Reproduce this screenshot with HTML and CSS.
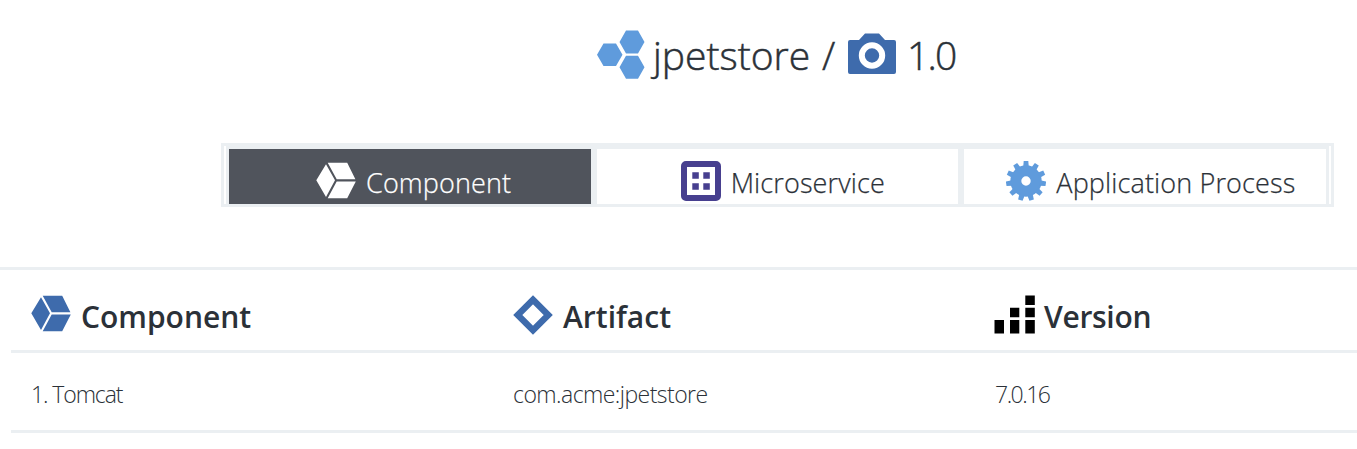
FILE: index.html
```html
<!DOCTYPE html>
<html lang="en">
<head>
<meta charset="utf-8">
<title>jpetstore / 1.0</title>
<link rel="stylesheet" href="styles.css">
</head>
<body>
<svg class="defs" aria-hidden="true">
  <symbol id="cube" viewBox="0 0 40 38">
    <path d="M11.7 .8H31.2L39.4 17.2H20.7ZM20.7 19.5H39.8L31.2 36.3H11.7ZM10 2.2L19 18.3L10 35L.3 18.3Z"/>
  </symbol>
</svg>
<h1 class="title">
  <svg class="icon-app" viewBox="0 0 48 48"><path d="M29 0H41L47.5 11.5L41 23H29L22.500 11.500ZM29 25.200H41L47.500 36.700L41 48.200H29L22.500 36.700ZM6.500 13H19L25.500 24.300L19 35.600H6.500L0 24.300Z"/></svg>
  <span class="name">jpetstore</span>
  <span class="slash">/</span>
  <svg class="icon-camera" viewBox="0 0 48 42"><path d="M2 7H11L17 .5H31L37 7H46Q48 7 48 9V39Q48 41 46 41H2Q0 41 0 39V9Q0 7 2 7Z"/><circle cx="24" cy="22.500" r="10.200"/></svg>
  <span class="number">1.0</span>
</h1>
<nav class="tabs">
  <a class="tab active"><svg class="icon-cube"><use href="#cube"/></svg><span class="t-component">Component</span></a>
  <a class="tab"><svg class="icon-micro" viewBox="0 0 40 40"><rect class="frame" x="3" y="3" width="34" height="34" rx="2"/><path d="M11.300 11.300h6.500v6.500h-6.500zM22.300 11.300h6.500v6.500h-6.500zM11.300 22.300h6.500v6.500h-6.500zM22.300 22.300h6.500v6.500h-6.500z"/></svg><span class="t-micro">Microservice</span></a>
  <a class="tab"><svg class="icon-gear" viewBox="-20 -20 40 40">
    <defs><path id="tooth" d="M-2.800 -14L-2.300 -20H2.300L2.800 -14Z"/></defs>
    <circle class="ring" r="10.200"/>
    <use href="#tooth"/><use href="#tooth" transform="rotate(32.727)"/><use href="#tooth" transform="rotate(65.454)"/><use href="#tooth" transform="rotate(98.182)"/><use href="#tooth" transform="rotate(130.909)"/><use href="#tooth" transform="rotate(163.636)"/><use href="#tooth" transform="rotate(196.364)"/><use href="#tooth" transform="rotate(229.091)"/><use href="#tooth" transform="rotate(261.818)"/><use href="#tooth" transform="rotate(294.546)"/><use href="#tooth" transform="rotate(327.273)"/>
  </svg><span class="t-process">Application Process</span></a>
</nav>
<main class="panel">
  <div class="row head">
    <div class="cell"><svg class="icon-cube"><use href="#cube"/></svg><span class="h-component">Component</span></div>
    <div class="cell"><svg class="icon-diamond" viewBox="0 0 40 40"><path d="M20 4.800L35.200 20L20 35.200L4.800 20Z"/></svg><span class="h-artifact">Artifact</span></div>
    <div class="cell"><svg class="icon-bars" viewBox="0 0 41 39"><path d="M.5 25h9.500v13.500H.5zM16 12.700h9.300v9.500H16zM16 25h9.300v13.500H16zM31.300 .5h9.500V10h-9.500zM31.300 12.700h9.500v9.500h-9.500zM31.300 25h9.500v13.500h-9.500z"/></svg><span class="h-version">Version</span></div>
  </div>
  <div class="row body">
    <div class="cell"><span class="c-name">1. Tomcat</span></div>
    <div class="cell"><span class="c-artifact">com.acme:jpetstore</span></div>
    <div class="cell"><span class="c-version">7.0.16</span></div>
  </div>
</main>
</body>
</html>
```
FILE: styles.css
```css
* { box-sizing: border-box; }
body {
  margin: 0;
  height: 449px;
  overflow: hidden;
  background: #fff;
  color: #2b3138;
  font-family: "Open Sans", "Noto Sans", sans-serif;
}
svg { display: block; flex: none; }
span { white-space: nowrap; }
.defs { display: none; }

.title {
  display: flex;
  align-items: flex-start;
  height: 143px;
  margin: 0;
  padding: 30px 0 0 597px;
  font-size: 39px;
  font-weight: 300;
  line-height: 50px;
  -webkit-text-stroke: .5px currentColor;
}
.icon-app { width: 48px; height: 49px; fill: #5f9bdc; }
.name { width: 157px; margin-left: 8px; }
.slash { width: 16px; margin-left: 12px; }
.icon-camera { width: 48px; height: 42px; margin: 3px 0 0 10px; fill: #3e6bac; overflow: visible; }
.icon-camera circle { fill: none; stroke: #fff; stroke-width: 6; }
.number { margin-left: 11px; letter-spacing: -1.8px; }

.tabs {
  display: grid;
  grid-template-columns: repeat(3, 1fr);
  width: 1113px;
  height: 64px;
  margin-left: 221px;
  padding: 0 2px;
  border: 3px solid #ebeff2;
}
.tab {
  display: flex;
  align-items: center;
  padding-top: 9px;
  border: solid #ebeff2;
  border-width: 3px 3px 0;
  font-size: 27px;
  font-weight: 300;
  line-height: 40px;
  letter-spacing: .13px;
  -webkit-text-stroke: .25px currentColor;
}
.tab span { margin-left: 10px; padding-top: 3px; }
.tab:nth-child(1) { padding-left: 87px; }
.tab:nth-child(2) { padding-left: 84px; }
.tab:nth-child(3) { padding-left: 42px; }
.tab.active { background: #50545c; background-clip: padding-box; color: #fff; }
.icon-cube { width: 40px; height: 38px; fill: #3e6bac; }
.active .icon-cube { fill: #fff; }
.icon-micro { width: 40px; height: 40px; fill: #473f8f; }
.frame { fill: none; stroke: #473f8f; stroke-width: 6; }
.icon-gear { width: 40px; height: 40px; fill: #5f9bdc; }
.ring { fill: none; stroke: #5f9bdc; stroke-width: 11; }

.panel {
  margin-top: 60px;
  padding-left: 11px;
  border-top: 3px solid #ebeff2;
}
.row {
  display: grid;
  grid-template-columns: 482px 482px 1fr;
  border-bottom: 3px solid #ebeff2;
}
.cell { display: flex; padding-left: 20px; }
.head { height: 83px; padding-top: 25px; font-size: 30px; font-weight: 600; line-height: 44px; }
.head .icon-cube { margin-right: 10px; }
.icon-diamond { width: 40px; height: 40px; margin-right: 10px; }
.icon-diamond path { fill: none; stroke: #3e6bac; stroke-width: 6.5; }
.icon-bars { width: 41px; height: 39px; margin: 0 9px 0 -1px; fill: #000; }
.h-version { letter-spacing: -.3px; }
.body { height: 80px; padding-top: 23px; font-size: 23px; font-weight: 300; line-height: 36px; }
.c-name { letter-spacing: -1.1px; }
.c-artifact { letter-spacing: -.55px; }
.c-version { letter-spacing: -1.5px; }
```
